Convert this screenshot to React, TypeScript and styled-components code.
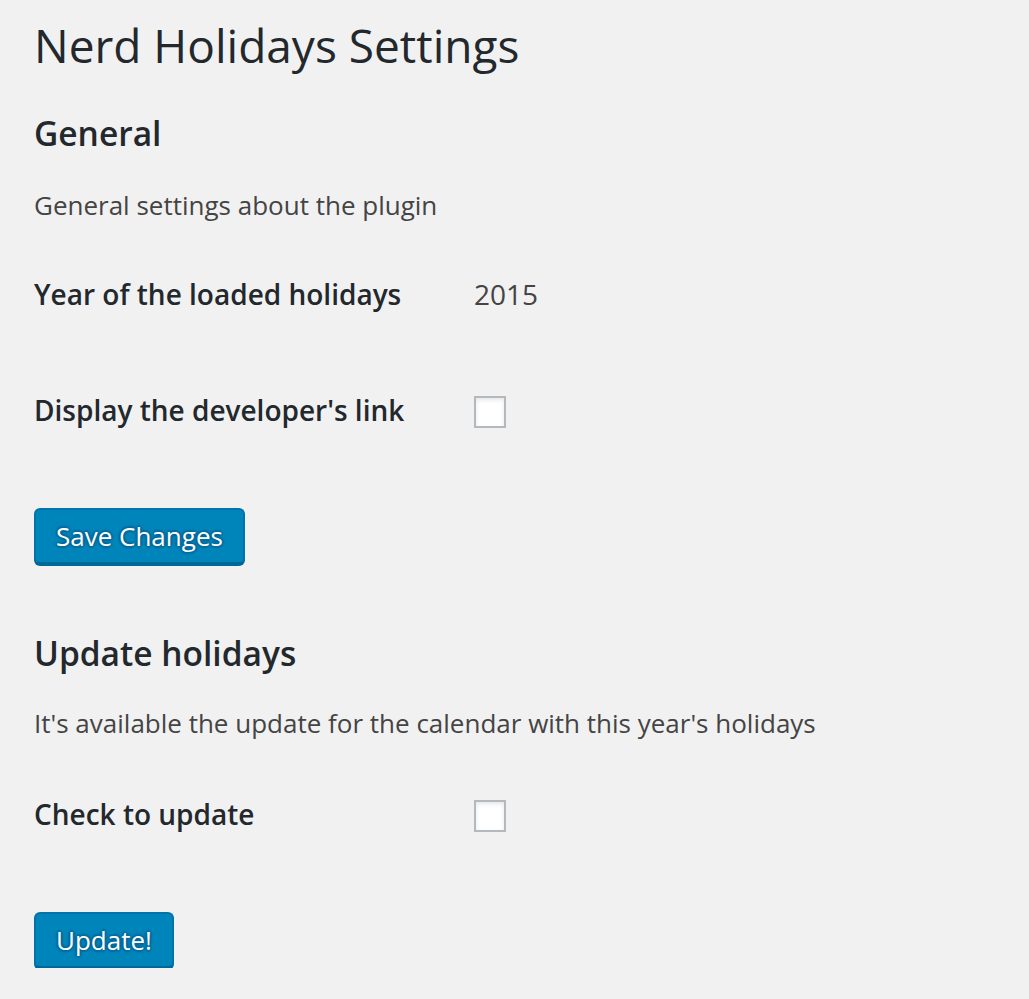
import React from "react";
import styled, { createGlobalStyle } from "styled-components";

const Global = createGlobalStyle`
  html, body { margin: 0; padding: 0; background: #f1f1f1; }
  body { font-family: "Open Sans", "Noto Sans", sans-serif; color: #444; }
`;

const Wrap = styled.div`
  padding: 15px 20px 0 34px;
  display: flex;
  flex-direction: column;
`;

const Title = styled.h1`
  margin: 0;
  font-size: 46px;
  line-height: 60px;
  font-weight: 400;
  color: #23282d;
`;

const SectionTitle = styled.h2<{ $top: number }>`
  margin: ${(p) => p.$top}px 0 0;
  font-size: 33.5px;
  line-height: 44px;
  font-weight: 600;
  color: #23282d;
`;

const Desc = styled.p<{ $top: number }>`
  margin: ${(p) => p.$top}px 0 0;
  font-size: 26px;
  line-height: 36px;
  color: #444;
`;

const Row = styled.div<{ $top: number }>`
  display: grid;
  grid-template-columns: 440px 1fr;
  align-items: center;
  margin-top: ${(p) => p.$top}px;
  min-height: 36px;
`;

const Label = styled.div`
  font-size: 28px;
  line-height: 36px;
  font-weight: 600;
  color: #23282d;
`;

const Value = styled.div`
  font-size: 28px;
  line-height: 36px;
  color: #444;
`;

const Check = styled.span`
  display: block;
  width: 32px;
  height: 32px;
  margin-top: 3px;
  box-sizing: border-box;
  border: 2px solid #b4b9be;
  background: #fff;
  box-shadow: inset 0 2px 4px rgba(0, 0, 0, 0.1);
`;

const Button = styled.button<{ $top: number }>`
  align-self: flex-start;
  margin-top: ${(p) => p.$top}px;
  height: 56px;
  padding: 0 20px;
  font-family: "Open Sans", "Noto Sans", sans-serif;
  font-size: 26px;
  line-height: 52px;
  color: #fff;
  background: #0085ba;
  border: 2px solid #0073aa;
  border-bottom-color: #006799;
  border-radius: 6px;
  box-shadow: 0 2px 0 #006799;
  text-shadow: 0 -2px 2px #006799, 2px 0 2px #006799, 0 2px 2px #006799, -2px 0 2px #006799;
  cursor: pointer;
`;

export default function App() {
  return (
    <>
      <Global />
      <Wrap>
        <Title>Nerd Holidays Settings</Title>
        <SectionTitle $top={36}>General</SectionTitle>
        <Desc $top={32}>General settings about the plugin</Desc>
        <Row $top={53}>
          <Label>Year of the loaded holidays</Label>
          <Value>2015</Value>
        </Row>
        <Row $top={80}>
          <Label>Display the developer's link</Label>
          <Check />
        </Row>
        <Button $top={80}>Save Changes</Button>
        <SectionTitle $top={67}>Update holidays</SectionTitle>
        <Desc $top={30}>It's available the update for the calendar with this year's holidays</Desc>
        <Row $top={55}>
          <Label>Check to update</Label>
          <Check />
        </Row>
        <Button $top={80}>Update!</Button>
      </Wrap>
    </>
  );
}
